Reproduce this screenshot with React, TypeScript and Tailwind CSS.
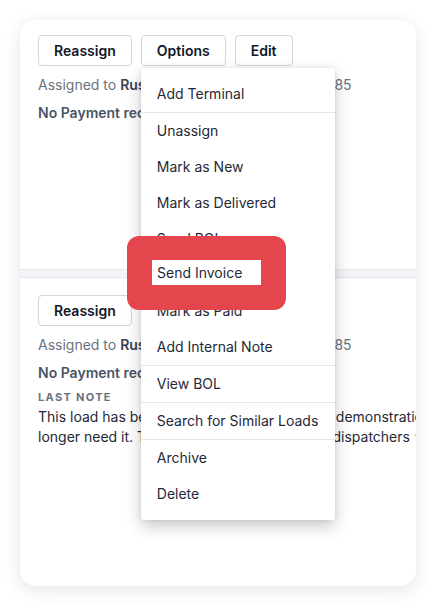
import React from "react";

const font = { fontFamily: "Inter, 'Noto Sans', sans-serif" };

const menuGroups: string[][] = [
  ["Add Terminal"],
  ["Unassign", "Mark as New", "Mark as Delivered", "Send BOL", "Send Invoice", "Mark as Paid", "Add Internal Note"],
  ["View BOL"],
  ["Search for Similar Loads"],
  ["Archive", "Delete"],
];

const OptionsMenu: React.FC = () => (
  <div className="absolute left-0 top-full z-20 mt-[2px] w-[194px] rounded-[3px] bg-white py-2 shadow-[0_6px_16px_rgba(0,0,0,0.22),0_0_4px_rgba(0,0,0,0.08)]">
    {menuGroups.map((group, gi) => (
      <div key={gi} className={gi > 0 ? "border-t border-gray-200" : ""}>
        {group.map((item) => (
          <div key={item} className="flex h-9 items-center px-4 text-sm text-[#1f2937]">
            {item}
          </div>
        ))}
      </div>
    ))}
  </div>
);

const ActionButton: React.FC<{ label: string; children?: React.ReactNode }> = ({ label, children }) => (
  <div className="relative">
    <button className="h-[31px] rounded-[4px] border border-gray-300 bg-white px-[15px] text-sm font-semibold text-[#111827]">
      {label}
    </button>
    {children}
  </div>
);

const AssignedInfo: React.FC = () => (
  <>
    <p className="mt-[9px] whitespace-nowrap text-sm leading-5 text-gray-500">
      Assigned to <span className="font-semibold text-gray-700">Russell Thompson</span> · Load #100385
    </p>
    <p className="mt-[8px] whitespace-nowrap text-sm font-semibold leading-5 text-gray-600">
      No Payment received yet
    </p>
  </>
);

export default function App() {
  return (
    <div className="relative h-[606px] w-[436px] bg-white pt-5" style={font}>
      <div className="mx-5 h-[566px] w-[396px] rounded-2xl bg-white shadow-[0_4px_18px_rgba(0,0,0,0.11)]">
        {/* First load */}
        <div className="relative z-10 h-[249px] px-[18px] pt-[15px]">
          <div className="flex gap-[9px]">
            <ActionButton label="Reassign" />
            <ActionButton label="Options">
              <OptionsMenu />
            </ActionButton>
            <ActionButton label="Edit" />
          </div>
          <AssignedInfo />
        </div>

        <div className="h-[9px] border-y border-[#e5e8ee] bg-[#f3f4f7]" />

        {/* Second load */}
        <div className="overflow-hidden rounded-b-2xl px-[18px] pt-[17px]">
          <div className="flex gap-[9px]">
            <ActionButton label="Reassign" />
          </div>
          <AssignedInfo />
          <p className="mt-[6px] text-[11px] font-bold uppercase leading-4 tracking-[0.12em] text-gray-500">
            Last note
          </p>
          <p className="mt-[2px] whitespace-nowrap text-sm leading-5 text-[#1f2937]">
            <span className="block">This load has been created for your use as a demonstration. You may delete it if you no</span>
            <span className="block">
              longer need it. To get started, invite all your <span className="ml-[4px]">dispatchers and drivers.</span>
            </span>
          </p>
        </div>
      </div>

      {/* Highlight annotation */}
      <div className="absolute left-[127px] top-[236px] z-30 h-[74px] w-[159px] rounded-xl bg-[#e5454c]">
        <div className="absolute left-[25px] top-[24px] flex h-[25px] w-[109px] items-center bg-white pl-[5px] text-sm text-[#1f2937]">
          Send Invoice
        </div>
      </div>
    </div>
  );
}
